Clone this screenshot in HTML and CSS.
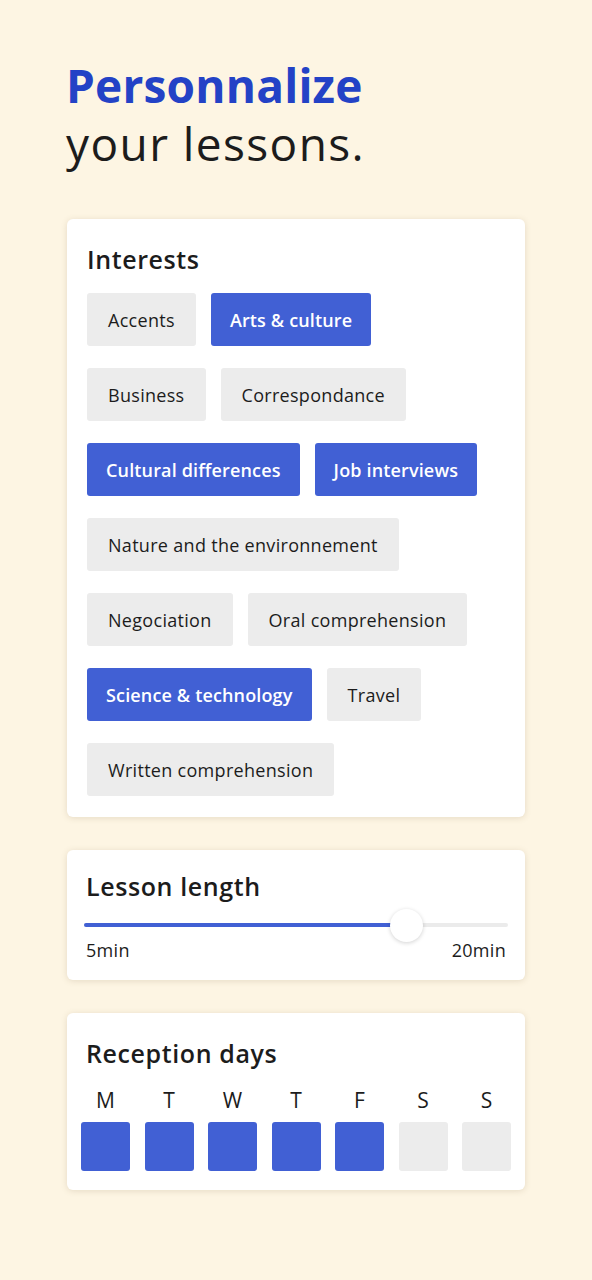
FILE: index.html
```html
<!DOCTYPE html>
<html lang="en">
<head>
<meta charset="utf-8">
<link rel="stylesheet" href="styles.css">
</head>
<body>
<main class="page">
  <h1 class="title"><span class="title-accent">Personnalize</span><br><span class="title-rest">your lessons.</span></h1>

  <section class="card interests">
    <h2 class="card-title">Interests</h2>
    <div class="chips">
      <div class="chip-row">
        <span class="chip">Accents</span>
        <span class="chip selected">Arts &amp; culture</span>
      </div>
      <div class="chip-row">
        <span class="chip">Business</span>
        <span class="chip">Correspondance</span>
      </div>
      <div class="chip-row">
        <span class="chip selected">Cultural differences</span>
        <span class="chip selected">Job interviews</span>
      </div>
      <div class="chip-row">
        <span class="chip">Nature and the environnement</span>
      </div>
      <div class="chip-row">
        <span class="chip">Negociation</span>
        <span class="chip">Oral comprehension</span>
      </div>
      <div class="chip-row">
        <span class="chip selected">Science &amp; technology</span>
        <span class="chip">Travel</span>
      </div>
      <div class="chip-row">
        <span class="chip">Written comprehension</span>
      </div>
    </div>
  </section>

  <section class="card length">
    <h2 class="card-title">Lesson length</h2>
    <div class="slider">
      <div class="track">
        <div class="fill" style="width: 72.6%"></div>
        <div class="thumb" style="left: 72.6%"></div>
      </div>
    </div>
    <div class="slider-labels"><span>5min</span><span>20min</span></div>
  </section>

  <section class="card days">
    <h2 class="card-title">Reception days</h2>
    <div class="day-grid">
      <span class="day-letter">M</span>
      <span class="day-letter">T</span>
      <span class="day-letter">W</span>
      <span class="day-letter">T</span>
      <span class="day-letter">F</span>
      <span class="day-letter">S</span>
      <span class="day-letter">S</span>
      <span class="day-box on"></span>
      <span class="day-box on"></span>
      <span class="day-box on"></span>
      <span class="day-box on"></span>
      <span class="day-box on"></span>
      <span class="day-box"></span>
      <span class="day-box"></span>
    </div>
  </section>
</main>
</body>
</html>
```

FILE: styles.css
```css
* { box-sizing: border-box; }

body {
  margin: 0;
  background: #fdf5e3;
  font-family: "Open Sans", "DejaVu Sans", sans-serif;
  color: #1c1c1c;
}

.page {
  padding: 56px 0 40px 67px;
  width: 525px;
}

.title {
  margin: 0 0 47px -1px;
  font-size: 46px;
  line-height: 58px;
  font-weight: 500;
  color: #1c1c1c;
  letter-spacing: 0.2px;
}

.title-accent {
  color: #2342c6;
  font-weight: 700;
}

.title-rest {
  letter-spacing: 1.4px;
}

.card {
  background: #fff;
  border-radius: 6px;
  box-shadow: 0 1px 6px rgba(120, 100, 60, 0.18);
  margin-bottom: 33px;
}

.card-title {
  margin: 0;
  font-size: 25px;
  line-height: 30px;
  font-weight: 600;
  letter-spacing: 0.6px;
  color: #1c1c1c;
}

.interests {
  padding: 25px 20px 21px 20px;
}

.interests .card-title {
  margin-bottom: 19px;
}

.chips {
  display: flex;
  flex-direction: column;
  row-gap: 22px;
}

.chip-row {
  display: flex;
  column-gap: 15px;
}

.chip {
  display: flex;
  align-items: center;
  height: 53px;
  padding: 0 21px;
  background: #ececec;
  border-radius: 3px;
  font-size: 18px;
  letter-spacing: 0.3px;
  color: #1c1c1c;
}

.chip.selected {
  background: #4160d4;
  color: #fff;
  font-weight: 600;
  letter-spacing: 0.15px;
  padding: 0 19px;
}

.length {
  padding: 21px 17px 18px 17px;
}

.length .card-title {
  padding-left: 2px;
}

.slider {
  margin-top: 11px;
  height: 26px;
  display: flex;
  align-items: center;
}

.track {
  position: relative;
  width: 100%;
  height: 4px;
  background: #ebebeb;
  border-radius: 2px;
}

.fill {
  height: 100%;
  background: #4160d4;
  border-radius: 2px;
}

.thumb {
  position: absolute;
  top: 50%;
  width: 33px;
  height: 33px;
  margin: -16.5px 0 0 -2px;
  background: #fff;
  border-radius: 50%;
  box-shadow: 0 1px 4px rgba(0, 0, 0, 0.18);
}

.slider-labels {
  display: flex;
  justify-content: space-between;
  padding: 0 2px;
  font-size: 18px;
  letter-spacing: 0.3px;
  line-height: 24px;
}

.days {
  padding: 25px 14px 19px 14px;
}

.days .card-title {
  padding-left: 5px;
  margin-bottom: 19px;
}

.day-grid {
  display: grid;
  grid-template-columns: repeat(7, 1fr);
  column-gap: 14.5px;
  row-gap: 9px;
}

.day-letter {
  text-align: center;
  font-size: 21px;
  line-height: 26px;
  font-weight: 500;
}

.day-box {
  height: 49px;
  background: #ececec;
  border-radius: 3px;
}

.day-box.on {
  background: #4160d4;
}
```
